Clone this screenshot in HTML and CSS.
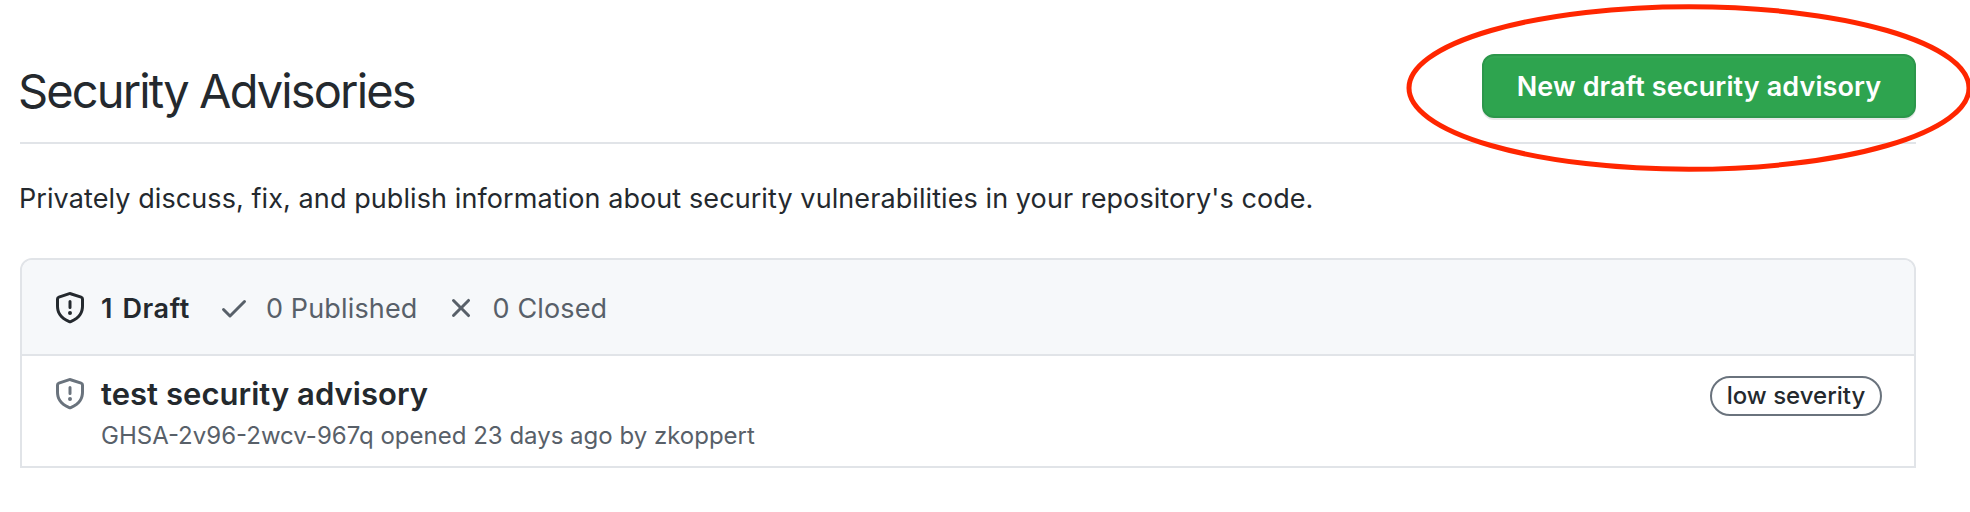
FILE: index.html
```html
<!DOCTYPE html>
<html lang="en"><head><meta charset="utf-8"><title>Security Advisories</title><link rel="stylesheet" href="styles.css"></head>
<body>
<main class="page">
<header class="head"><h1 class="title">Security Advisories</h1>
<div class="action"><button class="btn">New draft security advisory</button>
<svg class="ring" width="566" height="170" viewBox="0 0 566 170"><ellipse cx="283" cy="85" rx="280" ry="81.3" fill="none" stroke="#ff2600" stroke-width="5"/></svg></div></header>
<p class="intro">Privately discuss, fix, and publish information about security vulnerabilities in your repository's code.</p>
<section class="box">
<nav class="tabs">
<a class="tab current"><svg class="icon" viewBox="0 0 16 16"><path fill-rule="evenodd" d="M7.467.133a1.75 1.75 0 011.066 0l5.25 1.68A1.75 1.75 0 0115 3.48V7c0 1.566-.32 3.182-1.303 4.682-.983 1.498-2.585 2.813-5.032 3.855a1.7 1.7 0 01-1.33 0c-2.447-1.042-4.049-2.357-5.032-3.855C1.32 10.182 1 8.566 1 7V3.48a1.75 1.75 0 011.217-1.667l5.25-1.68zm.61 1.429a.25.25 0 00-.153 0l-5.25 1.68a.25.25 0 00-.174.238V7c0 1.358.275 2.666 1.057 3.86.784 1.194 2.121 2.34 4.366 3.297a.2.2 0 00.154 0c2.245-.956 3.582-2.104 4.366-3.298C13.225 9.666 13.5 8.36 13.5 7V3.48a.25.25 0 00-.174-.237l-5.25-1.68zM9 10.5a1 1 0 11-2 0 1 1 0 012 0zm-.25-5.75a.75.75 0 10-1.5 0v3a.75.75 0 001.5 0v-3z"/></svg><span>1 Draft</span></a>
<a class="tab published"><svg class="icon" viewBox="0 0 16 16"><path d="M13.78 4.22a.75.75 0 010 1.06l-7.25 7.25a.75.75 0 01-1.06 0L2.22 9.28a.75.75 0 011.06-1.06L6 10.94l6.72-6.72a.75.75 0 011.06 0z"/></svg><span>0 Published</span></a>
<a class="tab closed"><svg class="icon" viewBox="0 0 16 16"><path d="M3.72 3.72a.75.75 0 011.06 0L8 6.94l3.22-3.22a.75.75 0 111.06 1.06L9.06 8l3.22 3.22a.75.75 0 11-1.06 1.06L8 9.06l-3.22 3.22a.75.75 0 01-1.06-1.06L6.94 8 3.72 4.78a.75.75 0 010-1.06z"/></svg><span>0 Closed</span></a>
</nav>
<article class="row"><svg class="icon muted" viewBox="0 0 16 16"><path fill-rule="evenodd" d="M7.467.133a1.75 1.75 0 011.066 0l5.25 1.68A1.75 1.75 0 0115 3.48V7c0 1.566-.32 3.182-1.303 4.682-.983 1.498-2.585 2.813-5.032 3.855a1.7 1.7 0 01-1.33 0c-2.447-1.042-4.049-2.357-5.032-3.855C1.32 10.182 1 8.566 1 7V3.48a1.75 1.75 0 011.217-1.667l5.25-1.68zm.61 1.429a.25.25 0 00-.153 0l-5.25 1.68a.25.25 0 00-.174.238V7c0 1.358.275 2.666 1.057 3.86.784 1.194 2.121 2.34 4.366 3.297a.2.2 0 00.154 0c2.245-.956 3.582-2.104 4.366-3.298C13.225 9.666 13.5 8.36 13.5 7V3.48a.25.25 0 00-.174-.237l-5.25-1.68zM9 10.5a1 1 0 11-2 0 1 1 0 012 0zm-.25-5.75a.75.75 0 10-1.5 0v3a.75.75 0 001.5 0v-3z"/></svg>
<div class="info"><h2 class="name">test security advisory</h2><p class="meta">GHSA-2v96-2wcv-967q opened 23 days ago by zkoppert</p></div>
<span class="label">low severity</span></article>
</section>
</main>
</body></html>
```
FILE: styles.css
```css
* { box-sizing: border-box; }
body { margin: 0; background: #fff; color: #24292e; font-family: Inter, "Liberation Sans", sans-serif; overflow: hidden; }
h1, h2, p { margin: 0; white-space: nowrap; }
.page { padding: 54px 54px 0 20px; }
.head { display: flex; justify-content: space-between; height: 90px; border-bottom: 2px solid #e1e4e8; }
.title { margin-left: -2px; font-size: 47px; line-height: 74px; font-weight: 400; letter-spacing: -1.87px; }
.action { position: relative; width: 434px; height: 64px; }
.btn { display: block; width: 434px; height: 64px; padding: 1px 0 0; border: 2px solid #2c974b; border-radius: 12px; background: #2ea44f; color: #fff; font: 600 27px/59px Inter, sans-serif; letter-spacing: .1px; white-space: nowrap; box-shadow: 0 2px 0 rgba(27,31,35,.1), inset 0 2px 0 rgba(255,255,255,.03); }
.ring { position: absolute; left: -76px; top: -51px; pointer-events: none; }
.intro { margin: 34px 0 0 -1px; font-size: 27px; line-height: 42px; letter-spacing: .085px; }
.box { margin-top: 38px; height: 210px; border: 2px solid #e1e4e8; border-radius: 12px 12px 0 0; overflow: hidden; }
.tabs { display: flex; height: 96px; padding: 2px 0 0 32px; align-items: center; background: #f6f8fa; border-bottom: 2px solid #e1e4e8; font-size: 27px; letter-spacing: .15px; color: #586069; white-space: nowrap; }
.tab { display: flex; align-items: center; }
.icon { width: 32px; height: 32px; fill: currentColor; flex: none; }
.current { color: #24292e; font-weight: 600; letter-spacing: .6px; word-spacing: 2px; }
.current span { margin-left: 15px; }
.published { margin-left: 28px; }
.published span, .closed span { margin-left: 16px; }
.closed { margin-left: 27px; }
.row { display: flex; height: 110px; padding: 20px 32px 0; }
.muted { margin-top: 2px; color: #6a737d; }
.info { margin-left: 15px; flex: 1; }
.name { font-size: 31px; line-height: 36px; font-weight: 600; letter-spacing: .04px; }
.meta { margin-top: 6px; font-size: 24px; line-height: 36px; color: #586069; }
.label { width: 172px; height: 40px; border: 2px solid #6a737d; border-radius: 20px; font-size: 24px; line-height: 35px; font-weight: 500; text-align: center; white-space: nowrap; }
```
